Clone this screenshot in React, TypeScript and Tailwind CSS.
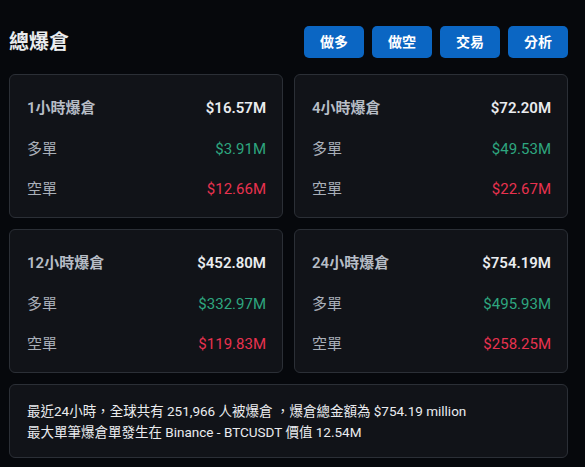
const font = { fontFamily: 'Roboto, "Noto Sans CJK TC", sans-serif' };

interface Stat {
  label: string;
  total: string;
  long: string;
  short: string;
}

const stats: Stat[] = [
  { label: '1小時爆倉', total: '$16.57M', long: '$3.91M', short: '$12.66M' },
  { label: '4小時爆倉', total: '$72.20M', long: '$49.53M', short: '$22.67M' },
  { label: '12小時爆倉', total: '$452.80M', long: '$332.97M', short: '$119.83M' },
  { label: '24小時爆倉', total: '$754.19M', long: '$495.93M', short: '$258.25M' },
];

const actions = ['做多', '做空', '交易', '分析'];

function StatCard({ stat }: { stat: Stat }) {
  return (
    <div className="flex h-[144px] flex-col gap-[9px] rounded-md border border-[#2b2f36] bg-[#111318] pb-[12px] pl-[17px] pr-[16px] pt-[18px]">
      <div className="flex h-[32px] items-center justify-between text-[15px] font-semibold">
        <span className="text-[#b7bdc6]">{stat.label}</span>
        <span className="text-[#eaecef]">{stat.total}</span>
      </div>
      <div className="flex h-[32px] items-center justify-between text-[15px]">
        <span className="text-[#a9afb8]">多單</span>
        <span className="text-[#2ea67f]">{stat.long}</span>
      </div>
      <div className="flex h-[32px] items-center justify-between text-[15px]">
        <span className="text-[#a9afb8]">空單</span>
        <span className="text-[#e8324f]">{stat.short}</span>
      </div>
    </div>
  );
}

export default function App() {
  return (
    <div className="min-h-[467px] w-[585px] bg-[#06080c] pl-[9px] pr-[17px] pt-[26px]" style={font}>
      <div className="flex h-[32px] items-center justify-between">
        <h1 className="text-[20px] font-bold text-[#eaecef]">總爆倉</h1>
        <div className="flex gap-[8px] pl-[1px]">
          {actions.map((action) => (
            <button
              key={action}
              className="h-[32px] w-[60px] rounded-[5px] bg-[#0b66c3] text-[14px] font-bold text-white"
            >
              {action}
            </button>
          ))}
        </div>
      </div>

      <div className="mt-[16px] grid grid-cols-2 gap-[11px]">
        {stats.map((stat) => (
          <StatCard key={stat.label} stat={stat} />
        ))}
      </div>

      <div className="mt-[11px] h-[74px] rounded-md border border-[#2b2f36] bg-[#111318] px-[17px] pt-[16px] text-[13.5px] leading-[21px] text-[#eaecef]">
        <div>最近24小時，全球共有 251,966 人被爆倉 ，爆倉總金額為 $754.19 million</div>
        <div>最大單筆爆倉單發生在 Binance - BTCUSDT 價值 12.54M</div>
      </div>
    </div>
  );
}
